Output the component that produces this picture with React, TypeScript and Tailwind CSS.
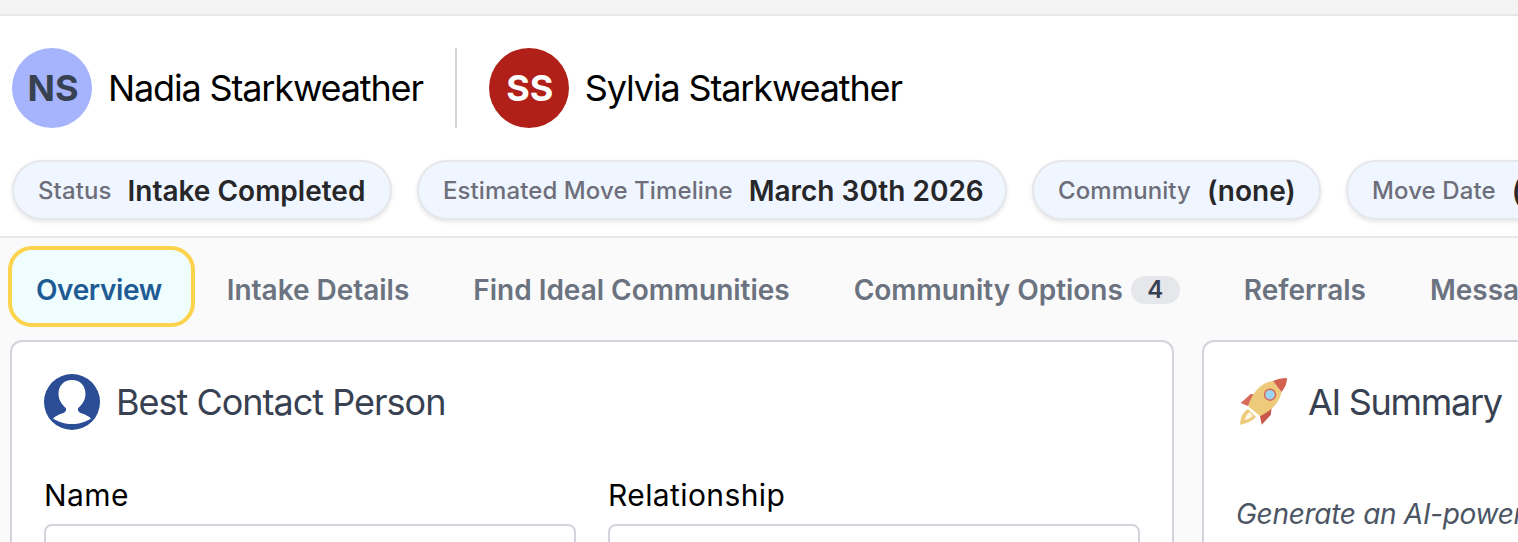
const pills = [
  { label: 'Status', value: 'Intake Completed', width: 'w-[380px]' },
  { label: 'Estimated Move Timeline', value: 'March 30th 2026', width: 'w-[590px]' },
  { label: 'Community', value: '(none)', width: 'w-[289px]' },
  { label: 'Move Date', value: '(none)', width: 'w-[289px]' },
]

const tabs = ['Intake Details', 'Find Ideal Communities', 'Community Options', 'Referrals', 'Messages']

function Avatar({ initials, className }: { initials: string; className: string }) {
  return (
    <div className={`flex h-20 w-20 shrink-0 items-center justify-center rounded-full pl-0.5 text-[36px] font-bold ${className}`}>
      {initials}
    </div>
  )
}

function PersonIcon() {
  return (
    <svg width="56" height="56" viewBox="0 0 56 56" className="shrink-0">
      <circle cx="28" cy="28" r="28" fill="#2a4d96" />
      <path
        d="M28 6C19.500 6 14.500 12 14.500 20C14.500 24 16 27 18 30C19.500 32 21 33 22 34.500C22.500 37 21 38.500 18 39.500C15 40.500 11.500 42 9 44.500C14 48 21 50 28 50C35 50 42 48 47 44.500C44.500 42 41 40.500 38 39.500C35 38.500 33.500 37 34 34.500C35 33 36.500 32 38 30C40 27 41.500 24 41.500 20C41.500 12 36.500 6 28 6Z"
        fill="#fff"
      />
    </svg>
  )
}

function RocketIcon() {
  return (
    <svg width="48" height="48" viewBox="0 0 48 48" className="shrink-0">
      <path d="M0 46.7C0.5 40 2 35 8 31L16 39C12 43 6 46 0 46.7Z" fill="#eecb7c" />
      <path d="M4.5 42C5.5 38.5 7 36 9.5 34L13 38C10.5 40 8 41.500 4.5 42Z" fill="#fdf6e3" />
      <path d="M0.7 25L10.700 16L17 16.700L8 28Z" fill="#d66a5b" />
      <path d="M21.700 46.700L30.700 37L31.700 29L20 38Z" fill="#c9564a" />
      <path d="M33 3C24 4 14 10 8 28L20 38C32 33 40 23 41.500 14Z" fill="#edcb7a" />
      <path d="M47 0C42 0 37 1 33 3L41.500 14C45 10 47 5 47 0Z" fill="#d4604f" />
      <circle cx="30" cy="16.700" r="5.500" fill="#9ad4ee" stroke="#d9685a" strokeWidth="1.500" />
    </svg>
  )
}

function Field({ label }: { label: string }) {
  return (
    <div className="flex flex-col gap-[11px]">
      <label className="text-[30px] leading-[36px] tracking-[0.4px] text-black">{label}</label>
      <div className="h-[60px] rounded-lg border-2 border-[#d1d5db] bg-white" />
    </div>
  )
}

export default function App() {
  return (
    <div className="h-[542px] w-[1518px] overflow-hidden bg-[#fafafa] font-['Inter',sans-serif]">
      <div className="h-4 border-b-2 border-[#e5e7eb] bg-[#f3f3f3]" />

      <div className="flex flex-col gap-8 border-b-2 border-[#e5e7eb] bg-white pt-8 pb-4 pl-3">
        <div className="flex items-center">
          <Avatar initials="NS" className="bg-[#a5b4fc] text-[#374151]" />
          <span className="ml-4 text-[36px] leading-[40px] tracking-[-1.15px] text-black">Nadia Starkweather</span>
          <div className="mx-8 h-20 w-0.5 bg-[#d1d5db]" />
          <Avatar initials="SS" className="bg-[#b02018] text-white" />
          <span className="ml-4 text-[36px] leading-[40px] tracking-[-1.15px] text-black">Sylvia Starkweather</span>
        </div>

        <div className="flex gap-[25px]">
          {pills.map((p) => (
            <div
              key={p.label}
              className={`flex h-[60px] shrink-0 items-center gap-4 rounded-full border-2 border-[#e5e7eb] bg-[#eff6ff] pt-px pl-6 whitespace-nowrap shadow-[0_2px_4px_rgba(0,0,0,0.1)] ${p.width}`}
            >
              <span className="text-[24px] font-medium tracking-[0.1px] text-[#6e6e7a]">{p.label}</span>
              <span className="text-[28px] font-semibold text-[#27272a]">{p.value}</span>
            </div>
          ))}
        </div>
      </div>

      <div className="flex items-center pt-2 pl-2">
        <div className="flex h-[81px] shrink-0 items-center rounded-3xl border-4 border-[#fcd34d] bg-[#f0fdff] pt-[6px] pr-[29px] pl-[24px] text-[28px] font-semibold tracking-[-0.4px] text-[#1e5b94]">
          Overview
        </div>
        {tabs.map((t) => (
          <div key={t} className="flex h-[81px] shrink-0 items-center gap-2 px-8 pt-[6px] text-[28px] font-semibold tracking-[-0.02px] text-[#6b7280]">
            {t}
            {t === 'Community Options' && (
              <span className="flex h-7 w-[49px] items-center justify-center rounded-full bg-[#e5e7eb] text-[24px] text-[#374151]">
                4
              </span>
            )}
          </div>
        ))}
      </div>

      <div className="mt-[13px] flex items-start gap-7 pl-[10px]">
        <div className="w-[1164px] shrink-0 rounded-xl border-2 border-[#d1d5db] bg-white px-8 pt-8 pb-8">
          <div className="flex items-center gap-4">
            <PersonIcon />
            <h2 className="text-[36px] leading-[40px] tracking-[-1px] text-[#374151]">Best Contact Person</h2>
          </div>
          <div className="mt-[47px] grid grid-cols-2 gap-8">
            <Field label="Name" />
            <Field label="Relationship" />
          </div>
        </div>

        <div className="w-[600px] shrink-0 rounded-xl border-2 border-[#d1d5db] bg-white px-8 pt-8 pb-8">
          <div className="flex items-center gap-4">
            <div className="flex h-14 w-14 items-center justify-center">
              <RocketIcon />
            </div>
            <h2 className="text-[36px] leading-[40px] tracking-[-1.3px] text-[#374151]">AI Summary</h2>
          </div>
          <p className="mt-[66px] whitespace-nowrap text-[28px] leading-[36px] tracking-[-0.3px] text-[#4b5563] italic">
            Generate an AI-powered summary
          </p>
        </div>
      </div>
    </div>
  )
}
